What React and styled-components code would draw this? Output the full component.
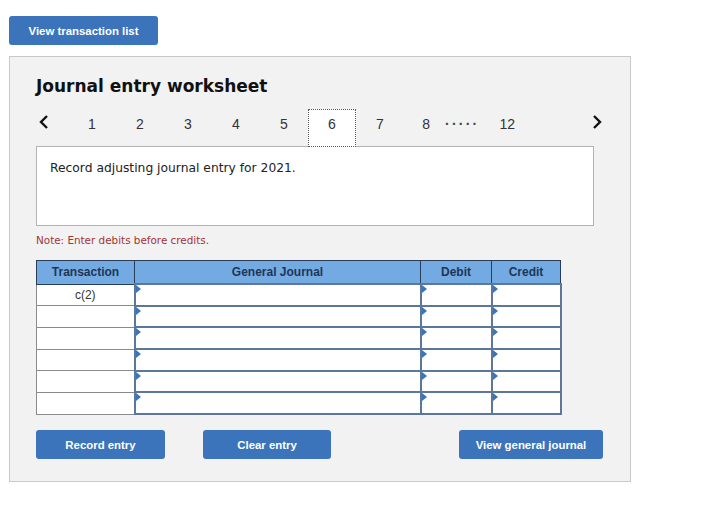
import React from 'react';
import styled, { createGlobalStyle } from 'styled-components';

const GlobalStyle = createGlobalStyle`
  body {
    margin: 0;
    background: #ffffff;
    font-family: "Liberation Sans", Arial, sans-serif;
  }
`;

const Page = styled.div`
  padding: 16px 0 0 9px;
  width: 706px;
  height: 520px;
  box-sizing: border-box;
`;

const Button = styled.button`
  display: flex;
  align-items: center;
  justify-content: center;
  width: ${({ $w }) => $w}px;
  height: 29px;
  margin-left: ${({ $ml }) => $ml || 0}px;
  padding: 0;
  border: none;
  border-radius: 3px;
  background: #3b74ba;
  color: #ffffff;
  font-family: "Liberation Sans", Arial, sans-serif;
  font-size: 11.4px;
  font-weight: bold;
  cursor: pointer;
`;

const Panel = styled.div`
  margin-top: 11px;
  width: 622px;
  height: 426px;
  box-sizing: border-box;
  border: 1px solid #c9c9c9;
  background: #f2f2f2;
  padding: 18px 0 0 26px;
`;

const Title = styled.h1`
  margin: 0;
  font-family: "DejaVu Sans", Verdana, sans-serif;
  font-size: 17px;
  font-weight: bold;
  color: #111111;
  line-height: 22px;
`;

const Pager = styled.div`
  display: flex;
  align-items: flex-start;
  margin-top: 12px;
  width: 566px;
  height: 38px;
  font-family: "Liberation Sans", Arial, sans-serif;
  font-size: 14px;
  color: #333333;
`;

const Arrow = styled.div`
  width: ${({ $w }) => $w || 32}px;
  height: 26px;
  display: flex;
  align-items: center;
  justify-content: ${({ $end }) => ($end ? 'flex-end' : 'flex-start')};
  padding-left: ${({ $end }) => ($end ? 0 : 3)}px;
  box-sizing: border-box;
  margin-left: ${({ $end }) => ($end ? 'auto' : 0)};
`;

const PageItem = styled.div`
  position: relative;
  z-index: ${({ $active }) => ($active ? 1 : 0)};
  width: ${({ $w }) => $w || 48}px;
  height: 38px;
  box-sizing: border-box;
  padding-top: 6px;
  line-height: 16px;
  text-align: ${({ $align }) => $align || 'center'};
  padding-right: ${({ $pr }) => $pr || 0}px;
  margin-left: ${({ $ml }) => $ml || 0}px;
  background: ${({ $active }) => ($active ? '#ffffff' : 'transparent')};
  border: 1px dotted ${({ $active }) => ($active ? '#5a5a5a' : 'transparent')};
`;

const Dots = styled.div`
  margin-left: 5px;
  padding-top: 3px;
  font-weight: bold;
  font-size: 14px;
  letter-spacing: 3px;
  line-height: 16px;
  color: #444444;
`;

const PromptBox = styled.div`
  margin-top: -1px;
  width: 558px;
  height: 80px;
  box-sizing: border-box;
  background: #ffffff;
  border: 1px solid #b3b3b3;
  padding: 14px 0 0 13px;
  font-family: "DejaVu Sans", Verdana, sans-serif;
  font-size: 12.3px;
  color: #222222;
`;

const Note = styled.div`
  margin-top: 8px;
  font-family: "DejaVu Sans", Verdana, sans-serif;
  font-size: 10.4px;
  color: #a23434;
`;

const Table = styled.table`
  margin-top: 14px;
  border-collapse: collapse;
  table-layout: fixed;
`;

const HeadCell = styled.th`
  width: ${({ $w }) => $w}px;
  height: 22px;
  padding: 0;
  background: #74aae2;
  border: 1px solid #2a3d58;
  font-size: 12px;
  font-weight: bold;
  color: #1e3656;
  text-align: center;
`;

const TxCell = styled.td`
  height: 19.7px;
  padding: 0;
  background: #ffffff;
  border: 1px solid #8a8a8a;
  font-size: 12px;
  color: #333333;
  text-align: center;
`;

const InputCell = styled.td`
  position: relative;
  height: 19.7px;
  padding: 0;
  background: #ffffff;
  border: 2px solid #5b7799;
`;

const Marker = styled.span`
  position: absolute;
  left: 0;
  top: 0;
  width: 0;
  height: 0;
  border-top: 4px solid transparent;
  border-bottom: 4px solid transparent;
  border-left: 5px solid #3b74ba;
`;

const Actions = styled.div`
  display: flex;
  margin-top: 15px;
`;

const Chevron = ({ dir }) => (
  <svg width="10" height="16" viewBox="0 0 10 16">
    <polyline
      points={dir === 'left' ? '8,2 2,8 8,14' : '2,2 8,8 2,14'}
      fill="none"
      stroke="#111"
      strokeWidth="2.4"
    />
  </svg>
);

const rows = ['c(2)', '', '', '', '', ''];

const App = () => {
  return (
    <Page>
      <GlobalStyle />
      <Button $w={149}>View transaction list</Button>

      <Panel>
        <Title>Journal entry worksheet</Title>

        <Pager>
          <Arrow><Chevron dir="left" /></Arrow>
          {[1, 2, 3, 4, 5, 6, 7].map((n) => (
            <PageItem key={n} $active={n === 6}>{n}</PageItem>
          ))}
          <PageItem $w={36} $align="right" $pr={9}>8</PageItem>
          <Dots>.....</Dots>
          <PageItem $w={24} $ml={19} $align="left">12</PageItem>
          <Arrow $end $w={20}><Chevron dir="right" /></Arrow>
        </Pager>

        <PromptBox>Record adjusting journal entry for 2021.</PromptBox>

        <Note>Note: Enter debits before credits.</Note>

        <Table>
          <thead>
            <tr>
              <HeadCell $w={97}>Transaction</HeadCell>
              <HeadCell $w={285}>General Journal</HeadCell>
              <HeadCell $w={70}>Debit</HeadCell>
              <HeadCell $w={68}>Credit</HeadCell>
            </tr>
          </thead>
          <tbody>
            {rows.map((tx, i) => (
              <tr key={i}>
                <TxCell>{tx}</TxCell>
                <InputCell><Marker /></InputCell>
                <InputCell><Marker /></InputCell>
                <InputCell><Marker /></InputCell>
              </tr>
            ))}
          </tbody>
        </Table>

        <Actions>
          <Button $w={129}>Record entry</Button>
          <Button $w={128} $ml={38}>Clear entry</Button>
          <Button $w={144} $ml={128}>View general journal</Button>
        </Actions>
      </Panel>
    </Page>
  );
};

export default App;
